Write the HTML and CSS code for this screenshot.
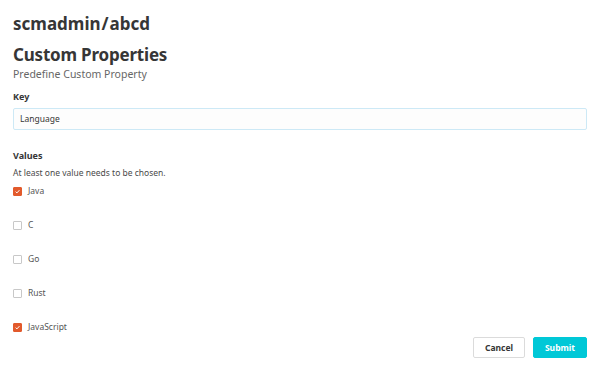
FILE: index.html
```html
<!DOCTYPE html>
<html>
<head>
<meta charset="utf-8">
<link rel="stylesheet" href="styles.css">
</head>
<body>
<div class="page">
  <h1 class="repo">scmadmin<span class="slash">/</span>abcd</h1>
  <h2 class="title">Custom Properties</h2>
  <p class="subtitle">Predefine Custom Property</p>

  <div class="field">
    <label class="label">Key</label>
    <div class="input">Language</div>
  </div>

  <div class="field values">
    <div class="label">Values</div>
    <p class="hint">At least one value needs to be chosen.</p>
    <ul class="options">
      <li class="option"><span class="box checked"><svg viewBox="0 0 10 10"><path d="M2.3 5.2 L4.2 7 L7.8 3" fill="none" stroke="#fff" stroke-width="1.4"/></svg></span>Java</li>
      <li class="option"><span class="box"></span>C</li>
      <li class="option"><span class="box"></span>Go</li>
      <li class="option"><span class="box"></span>Rust</li>
      <li class="option"><span class="box checked"><svg viewBox="0 0 10 10"><path d="M2.3 5.2 L4.2 7 L7.8 3" fill="none" stroke="#fff" stroke-width="1.4"/></svg></span>JavaScript</li>
    </ul>
  </div>

  <div class="actions">
    <button class="btn cancel">Cancel</button>
    <button class="btn submit">Submit</button>
  </div>
</div>
</body>
</html>
```

FILE: styles.css
```css
html, body {
  margin: 0;
  padding: 0;
  background: #fff;
}
body {
  font-family: "Noto Sans", "Open Sans", sans-serif;
  color: #363636;
}
.page {
  padding: 12px 3px 0 13px;
  display: flex;
  flex-direction: column;
}
.repo {
  margin: 0;
  font-size: 17px;
  line-height: 24px;
  font-weight: 700;
  color: #363636;
}
.slash {
  padding: 0 1px;
}
.title {
  margin: 10px 0 0 0;
  font-size: 17px;
  letter-spacing: -0.2px;
  line-height: 18px;
  font-weight: 700;
  color: #363636;
}
.subtitle {
  margin: 1px 0 0 0;
  font-size: 10.5px;
  line-height: 18px;
  color: #666;
}
.field {
  display: flex;
  flex-direction: column;
}
.label {
  font-size: 9px;
  font-weight: 700;
  line-height: 12px;
  margin-top: 8px;
  color: #363636;
}
.input {
  margin-top: 5px;
  height: 22px;
  box-sizing: border-box;
  border: 1px solid #cde9f6;
  border-radius: 2px;
  background: #fdfdfd;
  font-size: 8.5px;
  line-height: 20px;
  padding: 0 6px;
  color: #363636;
}
.values .label {
  margin-top: 20px;
}
.hint {
  margin: 5px 0 0 0;
  font-size: 8.5px;
  line-height: 12px;
  color: #4a4a4a;
}
.options {
  list-style: none;
  margin: 6px 0 0 0;
  padding: 0;
  display: flex;
  flex-direction: column;
  gap: 22px;
}
.option {
  display: flex;
  align-items: center;
  font-size: 8.5px;
  line-height: 12px;
  color: #555;
}
.box {
  width: 9px;
  height: 9px;
  box-sizing: border-box;
  border: 1px solid #c8c8c8;
  border-radius: 1px;
  margin-right: 6px;
  display: flex;
}
.box.checked {
  background: #e25a2c;
  border-color: #e25a2c;
}
.box svg {
  width: 100%;
  height: 100%;
}
.actions {
  display: flex;
  justify-content: flex-end;
  gap: 8px;
  margin-top: 4px;
}
.btn {
  height: 21px;
  box-sizing: border-box;
  font-family: inherit;
  font-size: 8.5px;
  font-weight: 700;
  border-radius: 2px;
  padding: 0;
}
.cancel {
  width: 52px;
  background: #fff;
  border: 1px solid #dbdbdb;
  color: #363636;
}
.submit {
  width: 54px;
  background: #00c8d7;
  border: 1px solid #00c8d7;
  color: #fff;
}
```
